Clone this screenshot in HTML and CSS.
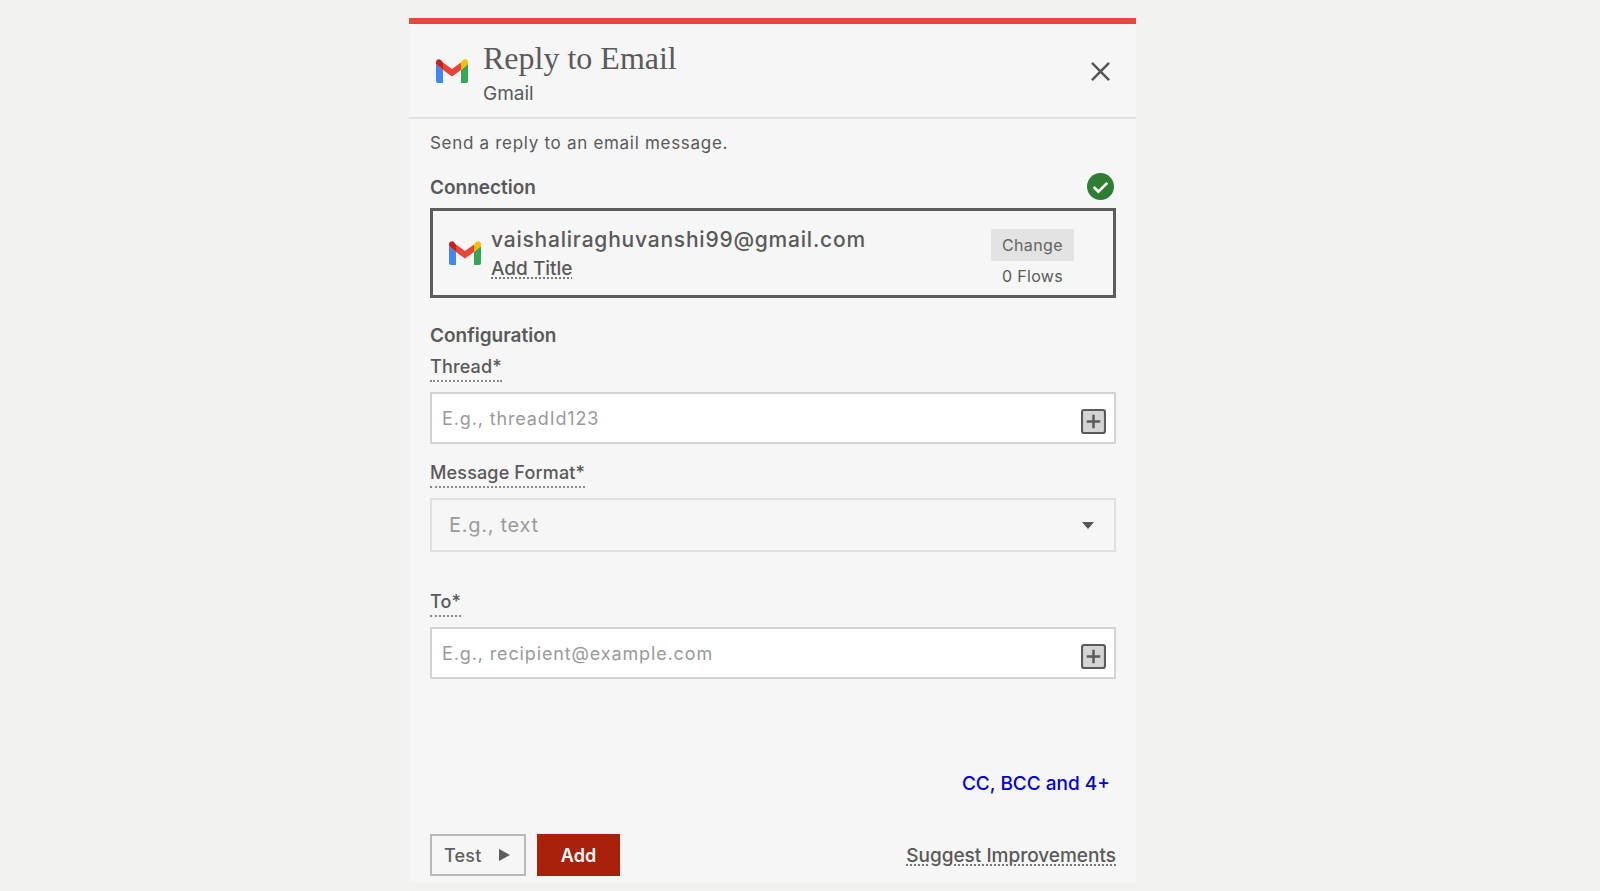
FILE: index.html
```html
<!DOCTYPE html>
<html lang="en">
<head>
<meta charset="utf-8">
<title>Reply to Email</title>
<link rel="stylesheet" href="styles.css">
</head>
<body>
<main class="panel">
  <header class="head">
    <svg class="gmail" viewBox="0 0 32 24" aria-hidden="true"><path fill="#4285f4" d="M0 5v17a2 2 0 0 0 2 2h5V11z"/><path fill="#34a853" d="M25 11v13h5a2 2 0 0 0 2-2V5z"/><path fill="#ea4335" d="M7 11v0L16 17.500 25 11V3.500L16 10 7 3.500z"/><path fill="#c5221f" d="M0 3.500V5l7 6V3.500L4.800.9C3-.5 0 .7 0 3.500z"/><path fill="#fbbc04" d="M25 3.500V11l7-6V3.500c0-2.800-3-4-4.800-2.600z"/></svg>
    <div class="titles">
      <h1 class="title">Reply to Email</h1>
      <div class="subtitle">Gmail</div>
    </div>
    <svg class="close" viewBox="0 0 20 20" aria-hidden="true"><path d="M1 1l18 18M19 1L1 19"/></svg>
  </header>
  <section class="body">
    <p class="desc">Send a reply to an email message.</p>
    <div class="conn-head">
      <h2 class="section">Connection</h2>
      <svg class="ok" viewBox="0 0 26 26" aria-hidden="true"><circle cx="13" cy="13" r="13" fill="#2e7d32"/><path d="M6.500 13.500l4.500 4.500 8.500-8.500" fill="none" stroke="#fff" stroke-width="2.600"/></svg>
    </div>
    <div class="conn-box">
      <svg class="gmail" viewBox="0 0 32 24" aria-hidden="true"><path fill="#4285f4" d="M0 5v17a2 2 0 0 0 2 2h5V11z"/><path fill="#34a853" d="M25 11v13h5a2 2 0 0 0 2-2V5z"/><path fill="#ea4335" d="M7 11v0L16 17.500 25 11V3.500L16 10 7 3.500z"/><path fill="#c5221f" d="M0 3.500V5l7 6V3.500L4.800.9C3-.5 0 .7 0 3.500z"/><path fill="#fbbc04" d="M25 3.500V11l7-6V3.500c0-2.800-3-4-4.800-2.600z"/></svg>
      <div class="account">
        <div class="email">vaishaliraghuvanshi99@gmail.com</div>
        <div class="add-title"><span class="dotted">Add Title</span></div>
      </div>
      <div class="conn-side">
        <button class="change" type="button">Change</button>
        <div class="flows">0 Flows</div>
      </div>
    </div>
    <h2 class="section config">Configuration</h2>
    <label class="field-label thread-label"><span class="boxed">Thread*</span></label>
    <div class="input">
      <span class="placeholder">E.g., threadId123</span>
      <svg class="plus" viewBox="0 0 24 24" aria-hidden="true"><rect x="1" y="1" width="22" height="22" rx="2" fill="#d4d4d4" stroke="#5a5a5a" stroke-width="2"/><path d="M12 5.500v13M5.500 12h13" stroke="#5a5a5a" stroke-width="2.400"/></svg>
    </div>
    <label class="field-label format-label"><span class="boxed">Message Format*</span></label>
    <div class="select">
      <span class="select-text">E.g., text</span>
      <span class="caret"></span>
    </div>
    <label class="field-label to-label"><span class="boxed">To*</span></label>
    <div class="input">
      <span class="placeholder">E.g., recipient@example.com</span>
      <svg class="plus" viewBox="0 0 24 24" aria-hidden="true"><rect x="1" y="1" width="22" height="22" rx="2" fill="#d4d4d4" stroke="#5a5a5a" stroke-width="2"/><path d="M12 5.500v13M5.500 12h13" stroke="#5a5a5a" stroke-width="2.400"/></svg>
    </div>
    <div class="more"><a class="more-link" href="#">CC, BCC and 4+</a></div>
    <footer class="foot">
      <button class="test" type="button">Test<span class="play"></span></button>
      <button class="add" type="button">Add</button>
      <a class="suggest dotted" href="#">Suggest Improvements</a>
    </footer>
  </section>
</main>
</body>
</html>
```

FILE: styles.css
```css
* { box-sizing: border-box; }

html, body { height: 100%; }

body {
  margin: 0;
  background: #f2f2f0;
  font-family: Inter, "Liberation Sans", sans-serif;
  color: #595959;
  overflow: hidden;
}

.panel {
  width: 727px;
  height: 865px;
  margin: 18px 0 0 409px;
  background: #f6f6f6;
  border-top: 6px solid #e2483d;
}

.head {
  display: flex;
  align-items: center;
  height: 95px;
  padding: 0 26px 0 27px;
  border-bottom: 2px solid #e2e2e2;
}

.gmail {
  width: 32px;
  height: 24px;
  flex: none;
}

.titles {
  align-self: flex-start;
  margin: 15px 0 0 15px;
  flex: 1;
}

.title {
  margin: 0;
  font: 400 32px/38px "Liberation Serif", serif;
  color: #5a5a5a;
}

.subtitle {
  margin-top: 6px;
  font-size: 19px;
  line-height: 22px;
}

.close {
  width: 19px;
  height: 19px;
  margin-top: 1px;
  fill: none;
  stroke: #555;
  stroke-width: 2.600;
}

.body {
  padding: 0 20px 0 21px;
}

.desc {
  margin: 0;
  padding-top: 13px;
  font-size: 17px;
  line-height: 22px;
  letter-spacing: 0.7px;
}

.conn-head {
  display: flex;
  justify-content: space-between;
  align-items: center;
  margin-top: 21px;
  height: 26px;
  padding-right: 2px;
}

.section {
  margin: 0;
  font-size: 19px;
  line-height: 26px;
  font-weight: 600;
}

.ok {
  width: 27px;
  height: 27px;
  margin-bottom: 3px;
}

.conn-box {
  display: flex;
  align-items: center;
  height: 90px;
  margin-top: 7px;
  padding: 0 39px 0 16px;
  border: 3px solid #5c5c5c;
}

.account {
  flex: 1;
  margin-left: 10px;
}

.email {
  font-size: 21px;
  line-height: 26px;
  letter-spacing: 0.78px;
  font-weight: 500;
}

.add-title {
  margin-top: 4px;
  font-size: 19px;
  line-height: 23px;
  font-weight: 500;
}

.dotted {
  text-decoration: underline dotted #777 2px;
  text-underline-offset: 3px;
  color: inherit;
}

.boxed {
  display: inline-block;
  padding-bottom: 2px;
  border-bottom: 2px dotted #8a8a8a;
}

.conn-side {
  align-self: flex-start;
  display: flex;
  flex-direction: column;
  align-items: center;
  margin-top: 18px;
}

.change {
  width: 83px;
  height: 32px;
  border: 0;
  background: #e3e3e3;
  font: 400 16px Inter, "Liberation Sans", sans-serif;
  letter-spacing: 0.4px;
  color: #636363;
}

.flows {
  margin-top: 5px;
  font-size: 16px;
  line-height: 20px;
  letter-spacing: 0.3px;
}

.config { margin-top: 25px; }

.field-label {
  display: block;
  font-size: 18px;
  line-height: 22px;
  font-weight: 500;
  letter-spacing: 0.15px;
}

.thread-label { margin-top: 7px; }
.format-label { margin-top: 18px; }
.to-label { margin-top: 39px; }

.input {
  display: flex;
  align-items: center;
  justify-content: space-between;
  height: 52px;
  margin-top: 10px;
  padding: 0 8px 0 10px;
  background: #fff;
  border: 2px solid #d3d3d3;
}

.placeholder {
  font-size: 18px;
  letter-spacing: 0.87px;
  color: #9a9a9a;
}

.plus {
  width: 25px;
  height: 25px;
  margin-top: 7px;
}

.select {
  display: flex;
  align-items: center;
  justify-content: space-between;
  height: 54px;
  margin-top: 10px;
  padding: 0 20px 0 17px;
  border: 2px solid #e0e0e0;
}

.select-text {
  font-size: 20px;
  letter-spacing: 0.72px;
  color: #9a9a9a;
}

.caret {
  width: 0;
  height: 0;
  border-left: 6.500px solid transparent;
  border-right: 6.500px solid transparent;
  border-top: 7px solid #555;
}

.more {
  display: flex;
  justify-content: flex-end;
  margin-top: 93px;
  padding-right: 6px;
}

.more-link {
  font-size: 19px;
  line-height: 24px;
  font-weight: 500;
  color: #0000e0;
  text-decoration: none;
}

.foot {
  display: flex;
  align-items: center;
  gap: 11px;
  margin-top: 38px;
}

.test {
  display: flex;
  align-items: center;
  justify-content: space-between;
  width: 96px;
  height: 42px;
  padding: 0 14px 0 12px;
  background: #f6f6f6;
  border: 2px solid #b9b9b9;
  font: 500 18px Inter, "Liberation Sans", sans-serif;
  letter-spacing: 0.2px;
  color: #5f5f5f;
}

.play {
  width: 0;
  height: 0;
  border-top: 6.500px solid transparent;
  border-bottom: 6.500px solid transparent;
  border-left: 11px solid #5c5c5c;
}

.add {
  width: 83px;
  height: 42px;
  border: 0;
  background: #a9210b;
  font: 600 18px Inter, "Liberation Sans", sans-serif;
  color: #fff;
}

.suggest {
  margin-left: auto;
  font-size: 19px;
  line-height: 23px;
  font-weight: 500;
}
```
